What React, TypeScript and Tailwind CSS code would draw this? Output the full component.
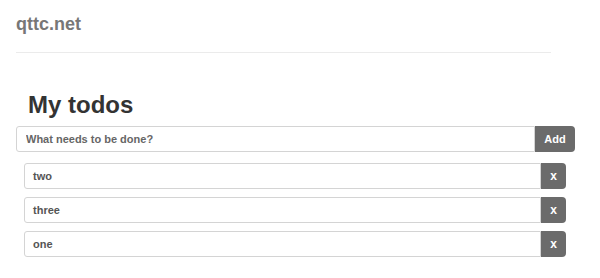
import { useState } from "react";

type Todo = { id: number; text: string };

export default function App() {
  const [todos, setTodos] = useState<Todo[]>([
    { id: 1, text: "two" },
    { id: 2, text: "three" },
    { id: 3, text: "one" },
  ]);
  const [draft, setDraft] = useState("");

  const add = () => {
    if (!draft.trim()) return;
    setTodos((t) => [...t, { id: Date.now(), text: draft.trim() }]);
    setDraft("");
  };

  return (
    <div className="w-[600px] h-[278px] bg-white font-['Liberation_Sans',Arial,sans-serif] overflow-hidden">
      <header className="ml-4 w-[535px] pt-[14px] pb-[18px] border-b border-[#ebebeb]">
        <div className="text-[18px] leading-[20px] font-bold text-[#777]">qttc.net</div>
      </header>

      <main className="ml-4 w-[559px]">
        <h1 className="mt-[38px] ml-3 text-[24px] leading-[28px] font-bold text-[#333]">My todos</h1>

        <div className="mt-[7px] flex h-[26px]">
          <input
            value={draft}
            onChange={(e) => setDraft(e.target.value)}
            placeholder="What needs to be done?"
            className="flex-1 min-w-0 rounded-l-[3px] border border-[#d4d4d4] px-[9px] text-[11px] font-bold text-[#555] placeholder:text-[#666] outline-none"
          />
          <button onClick={add} className="w-10 rounded-r-[4px] bg-[#6b6b6b] text-[11px] font-bold text-white">
            Add
          </button>
        </div>

        <ul className="mt-[11px] ml-2 w-[542px] flex flex-col gap-2">
          {todos.map((t) => (
            <li key={t.id} className="flex h-[26px]">
              <div className="flex-1 flex items-center rounded-l-[3px] border border-[#d4d4d4] pl-2 text-[11px] font-bold text-[#555]">
                {t.text}
              </div>
              <button
                onClick={() => setTodos((all) => all.filter((x) => x.id !== t.id))}
                className="w-[25px] rounded-r-[4px] bg-[#6b6b6b] text-[12px] font-bold text-white"
              >
                x
              </button>
            </li>
          ))}
        </ul>
      </main>
    </div>
  );
}
